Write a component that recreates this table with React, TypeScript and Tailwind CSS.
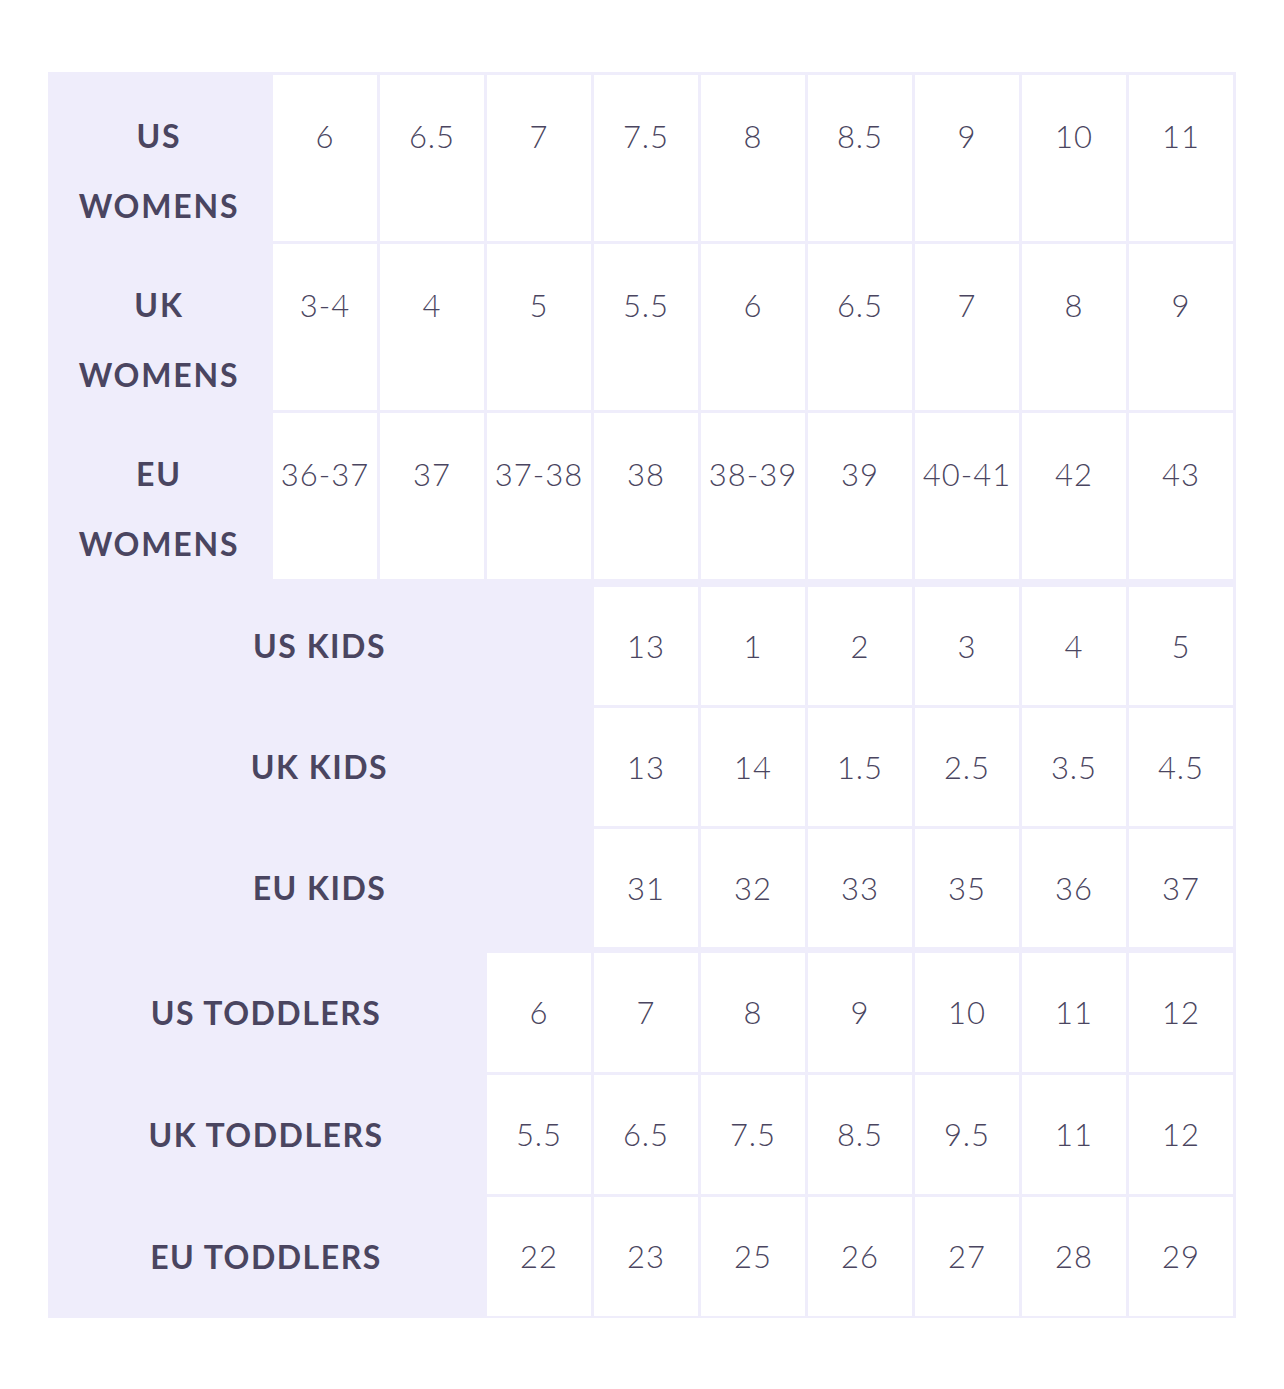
import { Fragment } from "react";

const womens = [
  { a: "US", b: "WOMENS", sizes: ["6", "6.5", "7", "7.5", "8", "8.5", "9", "10", "11"] },
  { a: "UK", b: "WOMENS", sizes: ["3-4", "4", "5", "5.5", "6", "6.5", "7", "8", "9"] },
  { a: "EU", b: "WOMENS", sizes: ["36-37", "37", "37-38", "38", "38-39", "39", "40-41", "42", "43"] },
];

const kids = [
  { label: "US KIDS", sizes: ["13", "1", "2", "3", "4", "5"] },
  { label: "UK KIDS", sizes: ["13", "14", "1.5", "2.5", "3.5", "4.5"] },
  { label: "EU KIDS", sizes: ["31", "32", "33", "35", "36", "37"] },
];

const toddlers = [
  { label: "US TODDLERS", sizes: ["6", "7", "8", "9", "10", "11", "12"] },
  { label: "UK TODDLERS", sizes: ["5.5", "6.5", "7.5", "8.5", "9.5", "11", "12"] },
  { label: "EU TODDLERS", sizes: ["22", "23", "25", "26", "27", "28", "29"] },
];

const font = { fontFamily: "Lato, 'Open Sans', sans-serif" };

export default function App() {
  return (
    <div className="min-h-screen bg-white pt-[72px] pl-[48px]" style={font}>
      <div className="w-[1188px] bg-[#efedfb] pt-[3px] pr-[3px] pb-[2px] flex flex-col text-[#4a4560]">
        {/* womens */}
        <div className="grid grid-cols-[222px_repeat(9,104px)] grid-rows-[repeat(3,166px)] gap-[3px]">
          {womens.map((row) => (
            <Fragment key={row.a}>
              <div className="pt-[26px] text-center text-[32px] leading-[70px] font-bold tracking-[1.8px]">
                <div>{row.a}</div>
                <div>{row.b}</div>
              </div>
              {row.sizes.map((s, i) => (
                <div key={i} className="bg-white pt-[26px] text-center text-[31px] leading-[70px] font-light tracking-[1px]">
                  {s}
                </div>
              ))}
            </Fragment>
          ))}
        </div>

        {/* kids */}
        <div className="mt-[8px] grid grid-cols-[543px_repeat(6,104px)] grid-rows-[repeat(3,118px)] gap-[3px]">
          {kids.map((row) => (
            <Fragment key={row.label}>
              <div className="flex items-center justify-center text-[32px] font-bold tracking-[1.5px]">
                {row.label}
              </div>
              {row.sizes.map((s, i) => (
                <div key={i} className="bg-white flex items-center justify-center text-[31px] font-light tracking-[1px]">
                  {s}
                </div>
              ))}
            </Fragment>
          ))}
        </div>

        {/* toddlers */}
        <div className="mt-[6px] grid grid-cols-[436px_repeat(7,104px)] grid-rows-[repeat(3,119px)] gap-[3px]">
          {toddlers.map((row) => (
            <Fragment key={row.label}>
              <div className="flex items-center justify-center text-[32px] font-bold tracking-[1.5px]">
                {row.label}
              </div>
              {row.sizes.map((s, i) => (
                <div key={i} className="bg-white flex items-center justify-center text-[31px] font-light tracking-[1px]">
                  {s}
                </div>
              ))}
            </Fragment>
          ))}
        </div>
      </div>
    </div>
  );
}
